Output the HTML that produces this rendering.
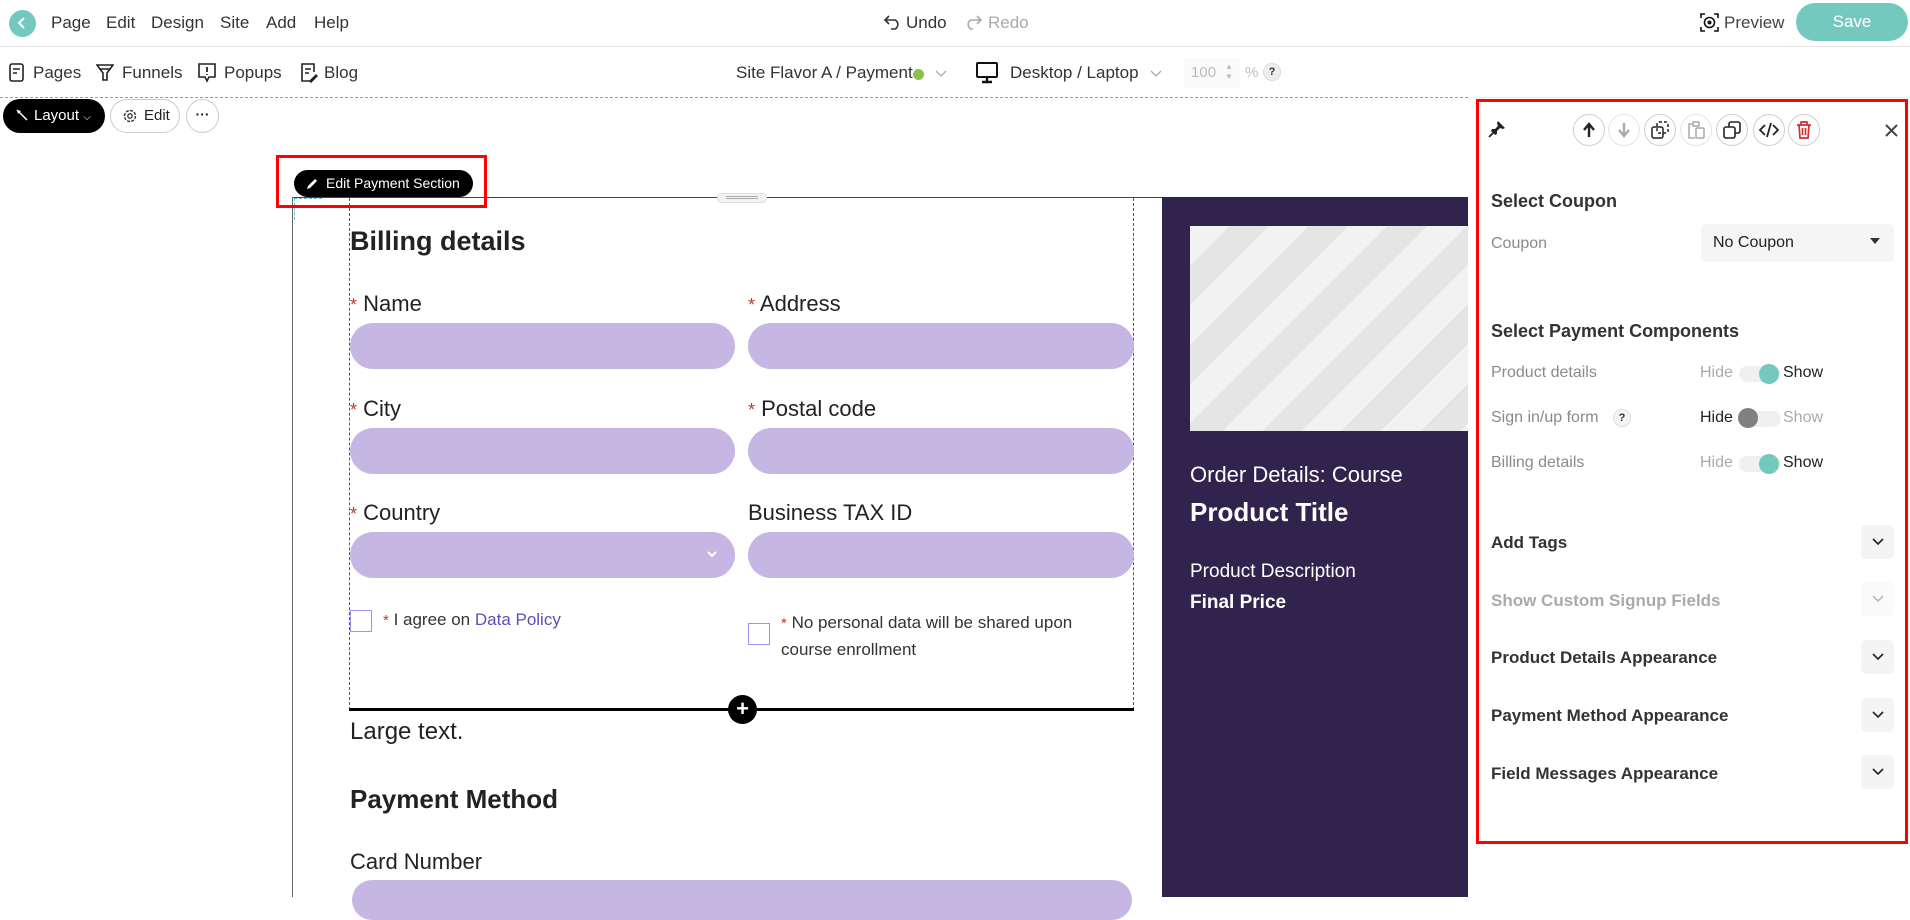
<!DOCTYPE html>
<html><head><meta charset="utf-8"><style>
*{box-sizing:border-box;margin:0;padding:0}
body{width:1910px;height:892px;overflow:hidden;background:#fff;font-family:"Liberation Sans",sans-serif;color:#333;position:relative}
.a{position:absolute;white-space:nowrap}
.m{font-size:17px;color:#333;top:13px}
.t2{font-size:17px;color:#333;top:63px}
.lbl{font-size:22px;color:#222}
.star{color:#c0392b;font-size:18px}
.inp{position:absolute;background:#c6b6e4;border-radius:23px;height:46px}
.circ{position:absolute;width:32px;height:32px;border:1px solid #d0d0d0;border-radius:50%;top:114px;display:flex;align-items:center;justify-content:center}
.pl{font-size:16px;color:#8a8a8a}
.ph{font-size:18px;font-weight:bold;color:#333}
.chev{position:absolute;left:1861px;width:33px;height:34px;background:#f4f4f4;border-radius:5px;display:flex;align-items:center;justify-content:center}
.trk{position:absolute;left:1739px;width:42px;height:16px;border-radius:8px;background:#f0f0f0}
.knob{position:absolute;width:20px;height:20px;border-radius:50%}
</style></head><body>
<!-- top bar -->
<div class="a" style="left:9px;top:10px;width:27px;height:27px;border-radius:50%;background:#74c9bf"></div>
<svg class="a" style="left:16px;top:16px" width="12" height="14" viewBox="0 0 12 14"><path d="M8 2 L3 7 L8 12" stroke="#fff" stroke-width="2" fill="none"/></svg>
<div class="a m" style="left:51px">Page</div>
<div class="a m" style="left:106px">Edit</div>
<div class="a m" style="left:151px">Design</div>
<div class="a m" style="left:220px">Site</div>
<div class="a m" style="left:266px">Add</div>
<div class="a m" style="left:314px">Help</div>
<svg class="a" style="left:884px;top:14px" width="18" height="16" viewBox="0 0 18 16"><path d="M5 2 L1 6 L5 10 M1 6 H11 A5 5 0 0 1 11 15 H7" stroke="#333" stroke-width="1.6" fill="none"/></svg>
<div class="a m" style="left:906px">Undo</div>
<svg class="a" style="left:964px;top:14px" width="18" height="16" viewBox="0 0 18 16"><path d="M13 2 L17 6 L13 10 M17 6 H7 A5 5 0 0 0 7 15 H9" stroke="#aaa" stroke-width="1.6" fill="none"/></svg>
<div class="a m" style="left:988px;color:#aaa">Redo</div>
<svg class="a" style="left:1700px;top:13px" width="19" height="19" viewBox="0 0 19 19"><path d="M1 5V1H5M14 1H18V5M18 14V18H14M5 18H1V14" stroke="#111" stroke-width="1.6" fill="none"/><circle cx="9.5" cy="9.5" r="5" stroke="#111" stroke-width="1.6" fill="none"/><circle cx="9.5" cy="9.5" r="2" fill="#111"/></svg>
<div class="a m" style="left:1724px;color:#444">Preview</div>
<div class="a" style="left:1796px;top:3px;width:112px;height:38px;border-radius:19px;background:#74c9bf;color:#fff;font-size:17px;text-align:center;line-height:38px">Save</div>
<div class="a" style="left:0;top:46px;width:1910px;height:1px;background:#e6e6e6"></div>
<!-- second row -->
<svg class="a" style="left:9px;top:63px" width="15" height="19" viewBox="0 0 15 19"><rect x="1" y="1" width="13" height="17" rx="2" stroke="#222" stroke-width="1.6" fill="none"/><path d="M4 6H11M4 10H8" stroke="#222" stroke-width="1.6"/></svg>
<div class="a t2" style="left:33px">Pages</div>
<svg class="a" style="left:96px;top:64px" width="18" height="17" viewBox="0 0 18 17"><path d="M1 1H17L11 9V16H7V9Z M3 5H15" stroke="#222" stroke-width="1.6" fill="none"/></svg>
<div class="a t2" style="left:122px">Funnels</div>
<svg class="a" style="left:198px;top:63px" width="18" height="20" viewBox="0 0 18 20"><path d="M1 1H17V14H11L9 18L7 14H1Z" stroke="#222" stroke-width="1.6" fill="none"/><path d="M9 4V9M9 11V12" stroke="#222" stroke-width="1.8"/></svg>
<div class="a t2" style="left:224px">Popups</div>
<svg class="a" style="left:300px;top:63px" width="18" height="20" viewBox="0 0 18 20"><path d="M12 18H2V1H14V9" stroke="#222" stroke-width="1.6" fill="none"/><path d="M5 6H11M5 10H9M10 18L16 12L17 13L11 19Z" stroke="#222" stroke-width="1.5" fill="none"/></svg>
<div class="a t2" style="left:324px">Blog</div>
<div class="a t2" style="left:736px">Site Flavor A / Payment</div>
<div class="a" style="left:913px;top:69px;width:11px;height:11px;border-radius:50%;background:#8bc34a"></div>
<svg class="a" style="left:935px;top:70px" width="12" height="8"><path d="M1 1L6 6L11 1" stroke="#aaa" stroke-width="1.3" fill="none"/></svg>
<svg class="a" style="left:975px;top:62px" width="24" height="22" viewBox="0 0 24 22"><rect x="2" y="1" width="20" height="14" rx="1" stroke="#111" stroke-width="2" fill="none"/><path d="M12 15V19M7 20H17" stroke="#111" stroke-width="2.4"/></svg>
<div class="a t2" style="left:1010px">Desktop / Laptop</div>
<svg class="a" style="left:1150px;top:70px" width="12" height="8"><path d="M1 1L6 6L11 1" stroke="#aaa" stroke-width="1.3" fill="none"/></svg>
<div class="a" style="left:1184px;top:58px;width:56px;height:30px;background:#fafafa"></div>
<div class="a" style="left:1191px;top:64px;font-size:15px;color:#bbb">100</div>
<div class="a" style="left:1225px;top:62px;font-size:8px;color:#bbb;line-height:10px">▲<br>▼</div>
<div class="a" style="left:1245px;top:64px;font-size:15px;color:#bbb">%</div>
<div class="a" style="left:1263px;top:63px;width:18px;height:18px;border-radius:50%;background:#eee;border:1px solid #ddd;font-size:11px;font-weight:bold;text-align:center;line-height:16px;color:#333">?</div>
<div class="a" style="left:0;top:97px;width:1468px;border-top:1px dashed #999"></div>
<div class="a" style="left:1468px;top:97px;width:442px;height:1px;background:#eee"></div>
<!-- layout btns -->
<div class="a" style="left:3px;top:99px;width:102px;height:34px;border-radius:17px;background:#000;color:#fff;font-size:15px;line-height:34px;padding-left:31px">Layout <span style="font-size:10px">⌵</span></div>
<svg class="a" style="left:16px;top:109px" width="12" height="12"><path d="M1 1L11 11" stroke="#fff" stroke-width="1.5"/><path d="M1 1L5 2L2 5Z" fill="#fff"/></svg>
<div class="a" style="left:110px;top:99px;width:70px;height:34px;border-radius:17px;border:1px solid #ccc;font-size:15px;line-height:32px;padding-left:33px;color:#222">Edit</div>
<svg class="a" style="left:122px;top:108px" width="16" height="16" viewBox="0 0 16 16"><circle cx="8" cy="8" r="5.5" stroke="#333" stroke-width="1.4" fill="none" stroke-dasharray="3 1.3"/><circle cx="8" cy="8" r="2.2" stroke="#333" stroke-width="1.3" fill="none"/></svg>
<div class="a" style="left:186px;top:99px;width:33px;height:34px;border-radius:50%;border:1px solid #ccc;font-size:14px;text-align:center;line-height:28px;font-weight:bold;color:#222">···</div>
<!-- canvas -->
<div class="a" style="left:292px;top:197px;width:870px;height:1px;background:#444"></div>
<div class="a" style="left:292px;top:197px;width:1px;height:700px;background:#666"></div>
<div class="a" style="left:294px;top:198px;width:28px;border-top:1px dashed #5bc0be"></div>
<div class="a" style="left:294px;top:198px;height:22px;border-left:1px dashed #5bc0be"></div>
<div class="a" style="left:349px;top:198px;width:785px;height:512px;border-left:1px dashed #555;border-right:1px dashed #555"></div>
<div class="a" style="left:717px;top:193px;width:50px;height:10px;border-radius:5px;background:#f3f3f3;border:1px solid #ddd"></div>
<div class="a" style="left:726px;top:196px;width:32px;border-top:1px solid #aaa;height:3px;border-bottom:1px solid #aaa"></div>
<div class="a" style="left:276px;top:155px;width:211px;height:53px;border:3px solid #f00"></div>
<div class="a" style="left:294px;top:170px;width:179px;height:27px;border-radius:14px;background:#000;color:#fff;font-size:14px;line-height:27px;padding-left:32px">Edit Payment Section</div>
<svg class="a" style="left:305px;top:177px" width="14" height="14"><path d="M2 12L3 9L10 2L12 4L5 11Z" fill="#fff"/></svg>

<div class="a" style="left:350px;top:226px;font-size:27px;font-weight:bold;color:#222">Billing details</div>
<div class="a lbl" style="left:350px;top:291px"><span class="star">*</span> Name</div>
<div class="a lbl" style="left:748px;top:291px"><span class="star">*</span> Address</div>
<div class="inp" style="left:350px;top:323px;width:385px"></div>
<div class="inp" style="left:748px;top:323px;width:386px"></div>
<div class="a lbl" style="left:350px;top:396px"><span class="star">*</span> City</div>
<div class="a lbl" style="left:748px;top:396px"><span class="star">*</span> Postal code</div>
<div class="inp" style="left:350px;top:428px;width:385px"></div>
<div class="inp" style="left:748px;top:428px;width:386px"></div>
<div class="a lbl" style="left:350px;top:500px"><span class="star">*</span> Country</div>
<div class="a lbl" style="left:748px;top:500px">Business TAX ID</div>
<div class="inp" style="left:350px;top:532px;width:385px"></div>
<svg class="a" style="left:707px;top:551px" width="10" height="8"><path d="M1 1L5 5L9 1" stroke="#fff" stroke-width="2" fill="none"/></svg>
<div class="inp" style="left:748px;top:532px;width:386px"></div>
<div class="a" style="left:350px;top:610px;width:22px;height:22px;border:1.5px solid #a78bf0"></div>
<div class="a" style="left:383px;top:610px;font-size:17px;color:#333"><span class="star" style="font-size:15px">*</span> I agree on <span style="color:#5a4fb5">Data Policy</span></div>
<div class="a" style="left:748px;top:623px;width:22px;height:22px;border:1.5px solid #a78bf0"></div>
<div class="a" style="left:781px;top:610px;font-size:17px;color:#333;line-height:26px"><span class="star" style="font-size:15px">*</span> No personal data will be shared upon<br>course enrollment</div>
<div class="a" style="left:349px;top:708px;width:785px;height:3px;background:#000"></div>
<div class="a" style="left:728px;top:695px;width:29px;height:29px;border-radius:50%;background:#000;color:#fff;font-size:22px;font-weight:bold;text-align:center;line-height:28px">+</div>
<div class="a" style="left:350px;top:718px;font-size:24px;color:#222">Large text.</div>
<div class="a" style="left:350px;top:784px;font-size:26px;font-weight:bold;color:#222">Payment Method</div>
<div class="a" style="left:350px;top:849px;font-size:22px;color:#222">Card Number</div>
<div class="inp" style="left:352px;top:880px;width:780px;height:40px;border-radius:20px"></div>
<!-- dark panel -->
<div class="a" style="left:1162px;top:197px;width:306px;height:700px;background:#30234d"></div>
<div class="a" style="left:1190px;top:226px;width:278px;height:205px;background:repeating-linear-gradient(135deg,#f2f2f2 0 28px,#e5e5e5 28px 56px)"></div>
<div class="a" style="left:1190px;top:462px;font-size:22px;color:#fff">Order Details: Course</div>
<div class="a" style="left:1190px;top:497px;font-size:26px;font-weight:bold;color:#fff">Product Title</div>
<div class="a" style="left:1190px;top:561px;font-size:19px;color:#fff">Product Description</div>
<div class="a" style="left:1190px;top:592px;font-size:19px;font-weight:bold;color:#fff">Final Price</div>
<!-- right panel -->
<div class="a" style="left:1476px;top:99px;width:432px;height:745px;border:3px solid #f00"></div>
<svg class="a" style="left:1488px;top:120px" width="18" height="18" viewBox="0 0 18 18"><path d="M10 1L17 8L15 9L12 8L9 11L9 14L7 15L3 11L4 9L7 9L10 6L9 3Z" fill="#222"/><path d="M5 13L1 17" stroke="#222" stroke-width="1.8"/></svg>
<div class="circ" style="left:1573px"><svg width="14" height="16"><path d="M7 15V3M2 8L7 2L12 8" stroke="#222" stroke-width="2.4" fill="none"/></svg></div>
<div class="circ" style="left:1608px;border-color:#e5e5e5"><svg width="14" height="16"><path d="M7 1V13M2 8L7 14L12 8" stroke="#aaa" stroke-width="2.4" fill="none"/></svg></div>
<div class="circ" style="left:1644px"><svg width="18" height="18"><rect x="6" y="1" width="11" height="11" rx="2" stroke="#222" stroke-width="1.5" fill="none" stroke-dasharray="3 2"/><rect x="1" y="6" width="11" height="11" rx="2" stroke="#222" stroke-width="1.5" fill="none"/></svg></div>
<div class="circ" style="left:1680px;border-color:#e5e5e5"><svg width="18" height="18"><path d="M5 3H2V17H8M6 1H12V5H6Z" stroke="#aaa" stroke-width="1.5" fill="none"/><rect x="9" y="7" width="8" height="10" rx="1" stroke="#aaa" stroke-width="1.5" fill="none"/></svg></div>
<div class="circ" style="left:1716px"><svg width="18" height="18"><rect x="6" y="1" width="11" height="11" rx="2" stroke="#222" stroke-width="1.6" fill="none"/><rect x="1" y="6" width="11" height="11" rx="2" stroke="#222" stroke-width="1.6" fill="#fff"/></svg></div>
<div class="circ" style="left:1753px"><svg width="20" height="16"><path d="M6 3L1 8L6 13M14 3L19 8L14 13M12 1L8 15" stroke="#222" stroke-width="1.8" fill="none"/></svg></div>
<div class="circ" style="left:1788px"><svg width="16" height="18"><path d="M1 4H15M5 4V1H11V4M3 4L4 17H12L13 4M6.5 7V14M9.5 7V14" stroke="#d32f2f" stroke-width="1.7" fill="none"/></svg></div>
<svg class="a" style="left:1885px;top:124px" width="13" height="13"><path d="M1 1L12 12M12 1L1 12" stroke="#444" stroke-width="2"/></svg>
<div class="a ph" style="left:1491px;top:191px">Select Coupon</div>
<div class="a pl" style="left:1491px;top:235px">Coupon</div>
<div class="a" style="left:1701px;top:224px;width:193px;height:38px;background:#f5f5f5;border-radius:5px"></div>
<div class="a" style="left:1713px;top:234px;font-size:16px;color:#222">No Coupon</div>
<div class="a" style="left:1870px;top:238px;width:0;height:0;border-left:5px solid transparent;border-right:5px solid transparent;border-top:6px solid #333"></div>
<div class="a ph" style="left:1491px;top:321px">Select Payment Components</div>
<div class="a pl" style="left:1491px;top:364px">Product details</div>
<div class="a pl" style="left:1491px;top:409px">Sign in/up form</div>
<div class="a" style="left:1613px;top:409px;width:18px;height:18px;border-radius:50%;border:1px solid #ddd;background:#f4f4f4;font-size:11px;font-weight:bold;text-align:center;line-height:16px;color:#333">?</div>
<div class="a pl" style="left:1491px;top:454px">Billing details</div>
<div class="a pl" style="left:1700px;top:364px;color:#aaa">Hide</div>
<div class="trk" style="top:366px"></div><div class="knob" style="left:1759px;top:364px;background:#74c9bf"></div>
<div class="a" style="left:1783px;top:364px;font-size:16px;color:#222">Show</div>
<div class="a" style="left:1700px;top:409px;font-size:16px;color:#222">Hide</div>
<div class="trk" style="top:411px"></div><div class="knob" style="left:1738px;top:408px;background:#808080"></div>
<div class="a pl" style="left:1783px;top:409px;color:#aaa">Show</div>
<div class="a pl" style="left:1700px;top:454px;color:#aaa">Hide</div>
<div class="trk" style="top:456px"></div><div class="knob" style="left:1759px;top:454px;background:#74c9bf"></div>
<div class="a" style="left:1783px;top:454px;font-size:16px;color:#222">Show</div>

<div class="a ph" style="left:1491px;top:533px;font-size:17px">Add Tags</div>
<div class="chev" style="top:525px"><svg width="12" height="8"><path d="M1 1L6 6L11 1" stroke="#222" stroke-width="1.6" fill="none"/></svg></div>
<div class="a ph" style="left:1491px;top:591px;font-size:17px;color:#aaa">Show Custom Signup Fields</div>
<div class="chev" style="top:582px;background:#fafafa"><svg width="12" height="8"><path d="M1 1L6 6L11 1" stroke="#bbb" stroke-width="1.6" fill="none"/></svg></div>
<div class="a ph" style="left:1491px;top:648px;font-size:17px">Product Details Appearance</div>
<div class="chev" style="top:640px"><svg width="12" height="8"><path d="M1 1L6 6L11 1" stroke="#222" stroke-width="1.6" fill="none"/></svg></div>
<div class="a ph" style="left:1491px;top:706px;font-size:17px">Payment Method Appearance</div>
<div class="chev" style="top:698px"><svg width="12" height="8"><path d="M1 1L6 6L11 1" stroke="#222" stroke-width="1.6" fill="none"/></svg></div>
<div class="a ph" style="left:1491px;top:764px;font-size:17px">Field Messages Appearance</div>
<div class="chev" style="top:755px"><svg width="12" height="8"><path d="M1 1L6 6L11 1" stroke="#222" stroke-width="1.6" fill="none"/></svg></div>
</body></html>
